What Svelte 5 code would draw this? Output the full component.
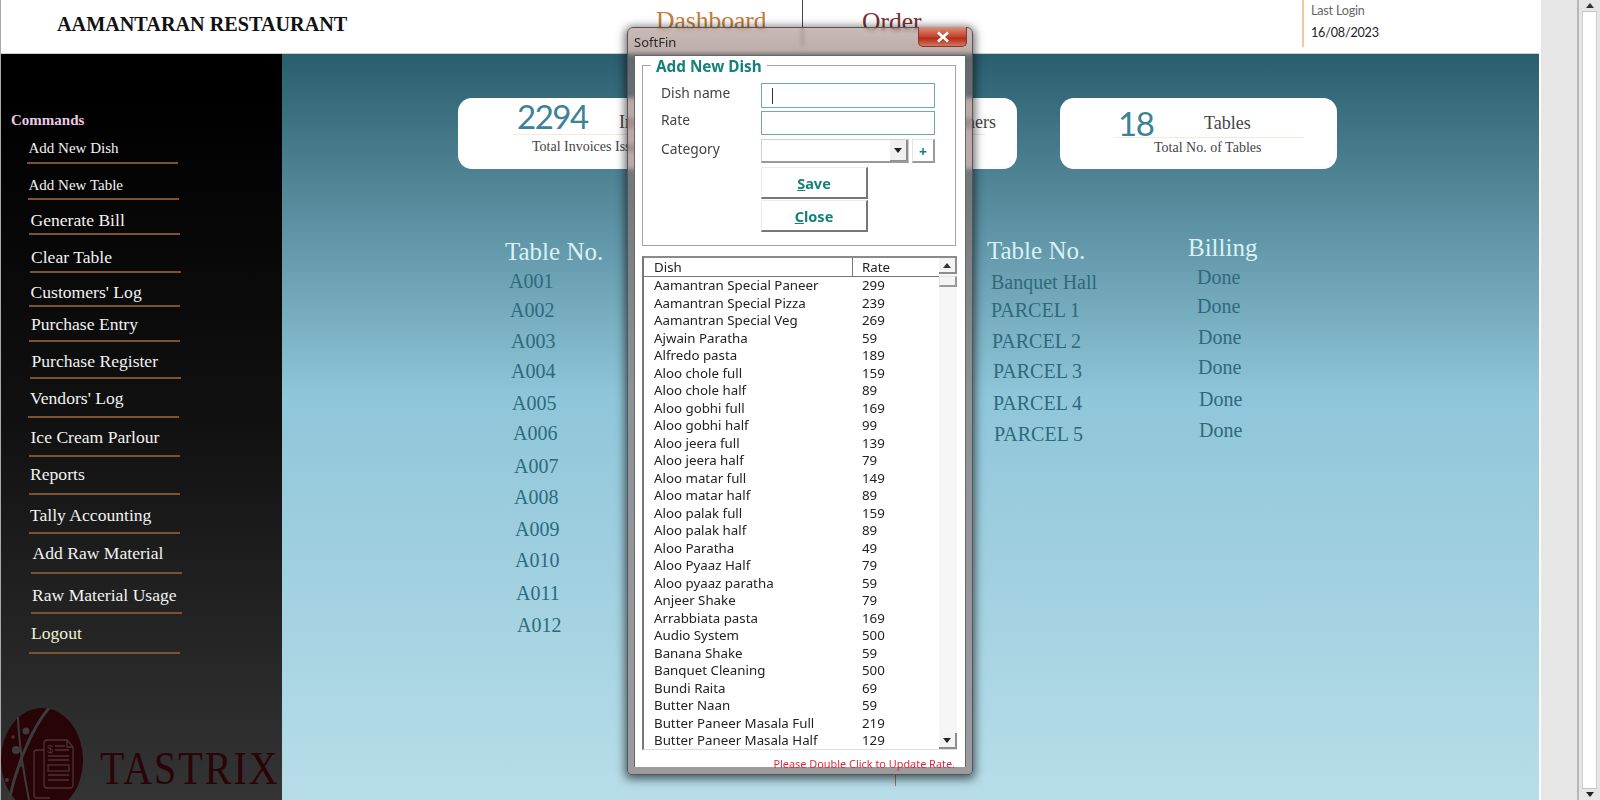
<script>
  // sidebar: text centre y, underline y, text x, line x (page coordinates, the capture is slightly skewed)
  const commands = [
    { label: 'Add New Dish', y: 148, line: 163, x: 28.5, lx: 26.5, small: true },
    { label: 'Add New Table', y: 185, line: 199, x: 28.5, lx: 27.5, small: true },
    { label: 'Generate Bill', y: 220, line: 234, x: 30.5, lx: 29 },
    { label: 'Clear Table', y: 257, line: 272, x: 31, lx: 29.5 },
    { label: "Customers' Log", y: 292, line: 306, x: 30.5, lx: 29 },
    { label: 'Purchase Entry', y: 324, line: 341, x: 31, lx: 29 },
    { label: 'Purchase Register', y: 361, line: 378, x: 31.5, lx: 29.5 },
    { label: "Vendors' Log", y: 398, line: 417, x: 30, lx: 28 },
    { label: 'Ice Cream Parlour', y: 437, line: 456, x: 30.5, lx: 28.5 },
    { label: 'Reports', y: 474, line: 494, x: 30, lx: 28.5 },
    { label: 'Tally Accounting', y: 515, line: 533, x: 30, lx: 28.5 },
    { label: 'Add Raw Material', y: 553, line: 573, x: 32.5, lx: 31 },
    { label: 'Raw Material Usage', y: 595, line: 613, x: 32, lx: 31 },
    { label: 'Logout', y: 633, line: 653, x: 31, lx: 28.5, last: true }
  ];

  function commandStyle(c, i) {
    const top = i === 0 ? 130 : commands[i - 1].line + 1;
    return `height:${c.line + 1 - top}px;margin-left:${c.lx - 1}px`;
  }

  const tableCol = [
    ['Table No.', 505, 252], ['A001', 509, 281], ['A002', 510, 310], ['A003', 511, 341],
    ['A004', 511, 371], ['A005', 512, 403], ['A006', 513, 433], ['A007', 514, 466],
    ['A008', 514, 497], ['A009', 515, 529], ['A010', 515, 560], ['A011', 516, 593], ['A012', 517, 625]
  ];
  const parcelCol = [
    ['Table No.', 987, 251], ['Banquet Hall', 991, 282], ['PARCEL 1', 991, 310], ['PARCEL 2', 992, 341],
    ['PARCEL 3', 993, 371], ['PARCEL 4', 993, 403], ['PARCEL 5', 994, 434]
  ];
  const billingCol = [
    ['Billing', 1188, 248], ['Done', 1197, 277], ['Done', 1197, 306], ['Done', 1198, 337],
    ['Done', 1198, 367], ['Done', 1199, 399], ['Done', 1199, 430]
  ];
  const columns = [
    { cells: tableCol, width: 482 },
    { cells: parcelCol, width: 201 },
    { cells: billingCol, width: 200 }
  ];

  function cellStyle(col, i) {
    const [, x, y] = col.cells[i];
    const gap = i === 0 ? y - 12 - 234 : y - col.cells[i - 1][2] - 24;
    return `margin-top:${gap}px;margin-left:${x - col.cells[0][1]}px`;
  }

  const cards = [
    { num: '2294', label: 'Invoices', caption: 'Total Invoices Issued', width: 240, numX: 59, ruleX: 55, labelX: 161, capX: 74, rule: 36, numY: -38, labelY: -22, capGap: 2 },
    { num: '', label: 'Customers', caption: '', width: 276, numX: 60, ruleX: 55, labelX: 178, capX: 74, rule: 36, numY: -37, labelY: -22, capGap: 2 },
    { num: '18', label: 'Tables', caption: 'Total No. of Tables', width: 277, numX: 58, ruleX: 54, labelX: 144, capX: 94, rule: 39, numY: -34, labelY: -24, capGap: 0 }
  ];

  const dishes = [
    ['Aamantran Special Paneer', 299], ['Aamantran Special Pizza', 239], ['Aamantran Special Veg', 269],
    ['Ajwain Paratha', 59], ['Alfredo pasta', 189], ['Aloo chole full', 159], ['Aloo chole half', 89],
    ['Aloo gobhi full', 169], ['Aloo gobhi half', 99], ['Aloo jeera full', 139], ['Aloo jeera half', 79],
    ['Aloo matar full', 149], ['Aloo matar half', 89], ['Aloo palak full', 159], ['Aloo palak half', 89],
    ['Aloo Paratha', 49], ['Aloo Pyaaz Half', 79], ['Aloo pyaaz paratha', 59], ['Anjeer Shake', 79],
    ['Arrabbiata pasta', 169], ['Audio System', 500], ['Banana Shake', 59], ['Banquet Cleaning', 500],
    ['Bundi Raita', 69], ['Butter Naan', 59], ['Butter Paneer Masala Full', 219], ['Butter Paneer Masala Half', 129]
  ];
</script>

<div class="page">
  <div class="app">
    <header class="topbar">
      <h1 class="brand">AAMANTARAN RESTAURANT</h1>
      <div class="nav-item dash">Dashboard</div>
      <div class="nav-item order">Order</div>
      <div class="login">
        <span class="login-label">Last Login</span>
        <span class="login-date">16/08/2023</span>
      </div>
    </header>

    <div class="body-row">
      <aside class="sidebar">
        <div class="commands-title">Commands</div>
        {#each commands as c, i}
          <div class="cmd" class:small={c.small} class:last={c.last} style={commandStyle(c, i)}>
            <span style="margin-left:{c.x - c.lx}px;margin-bottom:{c.line - c.y - 11}px">{c.label}</span>
          </div>
        {/each}
        <div class="logo">
          <svg width="84" height="92" viewBox="1 708 84 92" fill="none">
            <ellipse cx="42" cy="760" rx="41" ry="52" fill="#280308" />
            <path d="M49 708C32 728 17 764 9 800" stroke="#3c3c3c" stroke-width="3" />
            <path d="M18 717C19 745 24 775 29 800" stroke="#3c3c3c" stroke-width="2" />
            <circle cx="26" cy="731" r="3.5" fill="#3c3c3c" />
            <circle cx="16" cy="750" r="4" fill="#3c3c3c" />
            <circle cx="13" cy="737" r="1.8" fill="#3c3c3c" />
            <circle cx="22" cy="765" r="2" fill="#3c3c3c" />
            <circle cx="7" cy="780" r="2" fill="#3c3c3c" />
            <g stroke="#4c3236" stroke-width="1.3">
              <path d="M44 750H37Q34 750 34 753V795Q34 798 37 798H50" />
              <path d="M47 740H67L73 747V785Q73 788 70 788H47Q44 788 44 785V743Q44 740 47 740Z" />
              <path d="M67 740V747H73" />
              <path d="M55 746H65M55 750H69M48 756H69M48 760H69" />
              <rect x="48" y="765" width="21" height="6" />
              <path d="M48 775H69M48 780H69" />
            </g>
            <text x="47" y="753" class="logo-dollar">$</text>
          </svg>
          <span class="logo-word">TASTRIX</span>
        </div>
      </aside>

      <main class="main">
        <div class="cards">
          {#each cards as card}
            <div class="card" style="width:{card.width}px;padding-top:{card.rule}px">
              <div class="card-top">
                <span class="card-num" style="left:{card.numX}px;top:{card.numY}px">{card.num}</span>
                <span class="card-label" style="left:{card.labelX}px;top:{card.labelY}px">{card.label}</span>
              </div>
              <div class="card-rule" style="margin-left:{card.ruleX}px"></div>
              <div class="card-caption" style="margin-left:{card.capX}px;margin-top:{card.capGap}px">{card.caption}</div>
            </div>
          {/each}
        </div>

        <div class="columns">
          {#each columns as col}
            <div class="column" style="width:{col.width}px">
              {#each col.cells as cell, i}
                <div class="cell" class:head={i === 0} style={cellStyle(col, i)}>{cell[0]}</div>
              {/each}
            </div>
          {/each}
        </div>
        <span class="tick"></span>
      </main>
    </div>
  </div>

  <div class="gutter"></div>
  <div class="window-scroll">
    <div class="win-btn"><span class="arrow up"></span></div>
    <div class="win-track"></div>
    <div class="win-btn down"><span class="arrow dn"></span></div>
  </div>

  <section class="dialog">
    <div class="titlebar">
      <span class="title">SoftFin</span>
      <button class="close-x" type="button">
        <svg width="14" height="12" viewBox="0 0 14 12">
          <path d="M2 1.5L12 10.5M12 1.5L2 10.5" stroke="#fff" stroke-width="2.6" />
        </svg>
      </button>
    </div>

    <div class="dialog-body">
      <div class="group">
        <span class="legend">Add New Dish</span>
        <div class="form">
          <label class="lab" for="dish-name">Dish name</label>
          <div class="field first" id="dish-name"><i class="caret"></i></div>
          <label class="lab" for="dish-rate">Rate</label>
          <div class="field second" id="dish-rate"></div>
          <label class="lab" for="dish-cat">Category</label>
          <div class="combo-row">
            <div class="combo" id="dish-cat">
              <span class="combo-btn"><span class="arrow dn"></span></span>
            </div>
            <button class="plus" type="button">+</button>
          </div>
          <div class="buttons">
            <button class="act" type="button"><u>S</u>ave</button>
            <button class="act" type="button"><u>C</u>lose</button>
          </div>
        </div>
      </div>

      <div class="list">
        <div class="list-main">
          <div class="list-head">
            <span class="col-dish">Dish</span>
            <span class="col-rate">Rate</span>
          </div>
          {#each dishes as d}
            <div class="list-row">
              <span class="row-dish">{d[0]}</span>
              <span>{d[1]}</span>
            </div>
          {/each}
        </div>
        <div class="list-scroll">
          <div class="sb-btn"><span class="arrow up"></span></div>
          <div class="sb-thumb"></div>
          <div class="sb-track"></div>
          <div class="sb-btn"><span class="arrow dn"></span></div>
        </div>
      </div>

      <p class="note">Please Double Click to Update Rate.</p>
    </div>
  </section>
</div>

<style>
  :global(body) {
    margin: 0;
    background: #e6e6e6;
  }

  .page {
    position: relative;
    display: flex;
    width: 1600px;
    height: 800px;
    overflow: hidden;
    font-family: "Liberation Serif", serif;
  }

  .app {
    display: flex;
    flex-direction: column;
    width: 1541px;
    box-sizing: border-box;
    border-left: 1px solid #a8a8a8;
    border-right: 2px solid #fff;
    background: #fff;
  }

  /* header */
  .topbar {
    display: flex;
    align-items: flex-start;
    height: 54px;
    flex: none;
    box-sizing: border-box;
    border-bottom: 1px solid #c8d0d2;
  }

  .brand {
    width: 599px;
    margin: 13px 0 0 56px;
    flex: none;
    font-size: 20.2px;
    line-height: 22px;
    font-weight: bold;
    color: #111;
  }

  .nav-item {
    font-size: 25.5px;
    line-height: 30px;
    margin-top: 6px;
  }

  .dash {
    width: 146px;
    flex: none;
    color: #c67b33;
  }

  .order {
    width: 500px;
    flex: none;
    height: 46px;
    margin-top: 0;
    padding: 7px 0 0 59px;
    box-sizing: border-box;
    border-left: 1px solid #444;
    color: #7a3030;
  }

  .login {
    display: flex;
    flex-direction: column;
    gap: 4px;
    height: 47px;
    box-sizing: border-box;
    padding: 2px 0 0 7px;
    border-left: 2px solid #f0c9a0;
    font-family: Lato, "Open Sans", sans-serif;
    font-size: 12.6px;
    line-height: 18px;
    letter-spacing: -0.2px;
  }

  .login-label { color: #666; }
  .login-date { color: #222; }

  .body-row {
    display: flex;
    flex: 1;
    min-height: 0;
  }

  /* sidebar */
  .sidebar {
    display: flex;
    flex-direction: column;
    width: 281px;
    flex: none;
    padding-top: 56px;
    box-sizing: border-box;
    background: linear-gradient(#000 0%, #000 6%, #111 50%, #343434 100%);
  }

  .commands-title {
    margin-left: 10px;
    font-size: 15px;
    line-height: 20px;
    font-weight: bold;
    color: #ecc9e6;
  }

  .cmd {
    display: flex;
    align-items: flex-end;
    width: 151px;
    flex: none;
    box-sizing: border-box;
    border-bottom: 2px solid #7d5233;
    color: #f2f2f2;
    font-size: 17.6px;
    line-height: 20px;
    white-space: nowrap;
  }

  .cmd.small { font-size: 15px; }
  .cmd.last { color: #f0f0d4; }

  .logo {
    display: flex;
    align-items: flex-end;
    margin-top: auto;
    height: 92px;
  }

  .logo-dollar {
    fill: #4c3236;
    font-size: 11px;
    font-family: "Liberation Sans", sans-serif;
  }

  .logo-word {
    margin: 0 0 12px 15px;
    font-size: 40px;
    line-height: 32px;
    letter-spacing: 2px;
    color: #2a0408;
    transform: scaleY(1.18);
    transform-origin: bottom;
  }

  /* dashboard */
  .main {
    position: relative;
    flex: 1;
    padding-top: 44px;
    background: linear-gradient(#2a5e6e 0%, #8fc6d9 46%, #b7dde9 100%);
  }

  .cards {
    display: flex;
    gap: 43px;
    margin-left: 176px;
  }

  .card {
    height: 71px;
    flex: none;
    box-sizing: border-box;
    border-radius: 14px;
    background: #fff;
  }

  .card-top {
    position: relative;
  }

  .card-num {
    position: absolute;
    font-family: Lato, "Open Sans", sans-serif;
    font-size: 33px;
    line-height: 40px;
    letter-spacing: -1.5px;
    color: #3d8296;
  }

  .card-label {
    position: absolute;
    font-size: 18px;
    line-height: 20px;
    color: #444;
    white-space: nowrap;
  }

  .card-rule {
    width: 189px;
    height: 1px;
    background: #f6e8da;
  }

  .card-caption {
    font-size: 14px;
    line-height: 20px;
    color: #444;
    white-space: nowrap;
  }

  .columns {
    display: flex;
    margin: 65px 0 0 223px;
  }

  .column {
    flex: none;
  }

  .cell {
    height: 24px;
    font-size: 20px;
    line-height: 24px;
    color: #2e6a7c;
    white-space: nowrap;
  }

  .cell.head {
    font-size: 25px;
    color: #d9f1f6;
  }

  .tick {
    position: absolute;
    left: 613px;
    bottom: 14px;
    width: 1px;
    height: 12px;
    background: #a7744a;
  }

  /* window chrome on the right */
  .gutter {
    width: 36px;
    flex: none;
    border-right: 2px solid #b8b8b8;
    background: #e6e6e6;
  }

  .window-scroll {
    display: flex;
    flex-direction: column;
    width: 15px;
    flex: none;
    margin: 0 3px 0 3px;
  }

  .win-btn {
    display: flex;
    align-items: center;
    justify-content: center;
    height: 11px;
    flex: none;
    border-bottom: 1px solid #c4c4c4;
  }

  .win-btn.down {
    border-top: 1px solid #c4c4c4;
    border-bottom: none;
  }

  .win-track {
    flex: 1;
    background: #fff;
    border-left: 1px solid #cfcfcf;
    border-right: 1px solid #cfcfcf;
  }

  .arrow {
    width: 0;
    height: 0;
    border-left: 4px solid transparent;
    border-right: 4px solid transparent;
  }

  .arrow.up { border-bottom: 5px solid #333; }
  .arrow.dn { border-top: 5px solid #222; }

  /* dialog over the page */
  .dialog {
    position: absolute;
    left: 627px;
    top: 27px;
    display: flex;
    flex-direction: column;
    width: 346px;
    height: 748px;
    box-sizing: border-box;
    padding: 0 6px 7px;
    border: 1px solid #555;
    border-radius: 6px 6px 4px 4px;
    background: linear-gradient(rgba(150, 118, 112, 0.5), rgba(140, 112, 108, 0.6) 4%);
    backdrop-filter: blur(2px);
    box-shadow: 0 2px 10px 2px rgba(0, 0, 0, 0.6);
    font-family: "Noto Sans", "Open Sans", sans-serif;
  }

  .titlebar {
    display: flex;
    justify-content: space-between;
    height: 27px;
    flex: none;
  }

  .title {
    margin-top: 5px;
    font-size: 13px;
    line-height: 18px;
    color: #2a2a2a;
  }

  .close-x {
    display: flex;
    align-items: center;
    justify-content: center;
    width: 49px;
    height: 20px;
    padding: 0;
    margin: -1px -1px 0 0;
    border: 1px solid #7c3a30;
    border-top: none;
    border-radius: 0 0 5px 5px;
    background: linear-gradient(#d9927f, #c8432c 50%, #b0301f 60%, #d9735c);
  }

  .dialog-body {
    flex: 1;
    min-height: 0;
    box-sizing: border-box;
    padding: 9px 0 0 7px;
    border: 1px solid #666;
    border-width: 1px 1px 0;
    background: #fff;
    position: relative;
  }

  .group {
    position: relative;
    width: 314px;
    height: 181px;
    box-sizing: border-box;
    padding: 17px 0 0 118px;
    border: 1px solid #a4a4a4;
  }

  .legend {
    position: absolute;
    top: -9px;
    left: 8px;
    padding: 0 5px;
    background: #fff;
    font-size: 15.3px;
    line-height: 19px;
    font-weight: bold;
    color: #16807a;
  }

  .form {
    display: grid;
    grid-template-columns: 174px;
    grid-auto-rows: min-content;
    row-gap: 3px;
    position: relative;
  }

  .lab {
    position: absolute;
    left: -100px;
    font-size: 13.8px;
    line-height: 20px;
    color: #444;
  }

  .lab:nth-of-type(1) { top: 0; }
  .lab:nth-of-type(2) { top: 27px; }
  .lab:nth-of-type(3) { top: 56px; }

  .field {
    box-sizing: border-box;
    border: 1px solid #6faba6;
    display: flex;
    align-items: center;
  }

  .field.first { height: 25px; }
  .field.second { height: 24px; }

  .caret {
    width: 1px;
    height: 16px;
    margin-left: 10px;
    background: #333;
  }

  .combo-row {
    display: flex;
    justify-content: space-between;
    height: 24px;
    margin-top: 1px;
  }

  .combo {
    display: flex;
    justify-content: flex-end;
    width: 148px;
    box-sizing: border-box;
    border: 1px solid #cfcfcf;
    border-bottom: 2px solid #9a9a9a;
  }

  .combo-btn {
    display: flex;
    align-items: center;
    justify-content: center;
    width: 16px;
    background: #f0f0f0;
    border-right: 2px solid #8d8d8d;
    border-bottom: 1px solid #8d8d8d;
  }

  .plus {
    width: 23px;
    padding: 3px 0 0;
    border: 1px solid #e4e4e4;
    border-right: 2px solid #9a9a9a;
    border-bottom: 2px solid #9a9a9a;
    background: #fff;
    color: #16807a;
    font: bold 14px/1 "Noto Sans", sans-serif;
  }

  .buttons {
    display: flex;
    flex-direction: column;
    gap: 1px;
    margin-top: 1px;
  }

  .act {
    width: 107px;
    height: 32px;
    padding: 2px 0 0;
    border: 1px solid #ececec;
    border-right: 2px solid #777;
    border-bottom: 2px solid #777;
    background: #fff;
    color: #16807a;
    font: bold 14.5px/1 "Noto Sans", sans-serif;
  }

  .list {
    display: flex;
    width: 315px;
    height: 494px;
    box-sizing: border-box;
    margin-top: 10px;
    border-top: 2px solid #8a8a8a;
    border-left: 2px solid #777;
    border-bottom: 1px solid #ddd;
    overflow: hidden;
  }

  .list-main {
    flex: 1;
    min-width: 0;
  }

  .list-head {
    display: grid;
    grid-template-columns: 209px 1fr;
    height: 19px;
    box-sizing: border-box;
    border-bottom: 1px solid #777;
    font-size: 13.3px;
    line-height: 19px;
    color: #222;
  }

  .col-dish { padding-left: 10px; border-right: 1px solid #777; }
  .col-rate { padding-left: 9px; }

  .list-row {
    display: grid;
    grid-template-columns: 209px 1fr;
    height: 17.5px;
    font-size: 13.3px;
    line-height: 17.5px;
    color: #222;
    white-space: nowrap;
  }

  .list-row span { padding-left: 9px; }
  .list-row .row-dish { padding-left: 10px; }

  .list-scroll {
    display: flex;
    flex-direction: column;
    width: 18px;
    flex: none;
    background: #f5f5f5;
  }

  .sb-btn {
    display: flex;
    align-items: center;
    justify-content: center;
    height: 16px;
    flex: none;
    box-sizing: border-box;
    background: #f4f4f4;
    border-right: 2px solid #8d8d8d;
    border-bottom: 2px solid #8d8d8d;
  }

  .sb-thumb {
    height: 11px;
    margin-top: 2px;
    flex: none;
    background: #f4f4f4;
    border: 1px solid #e4e4e4;
    border-right: 2px solid #9a9a9a;
    border-bottom: 2px solid #9a9a9a;
    box-sizing: border-box;
  }

  .sb-track { flex: 1; }

  .note {
    margin: 8px 10px 0 0;
    text-align: right;
    font-size: 10.9px;
    line-height: 12px;
    color: #dd2a3c;
    white-space: nowrap;
  }
</style>
